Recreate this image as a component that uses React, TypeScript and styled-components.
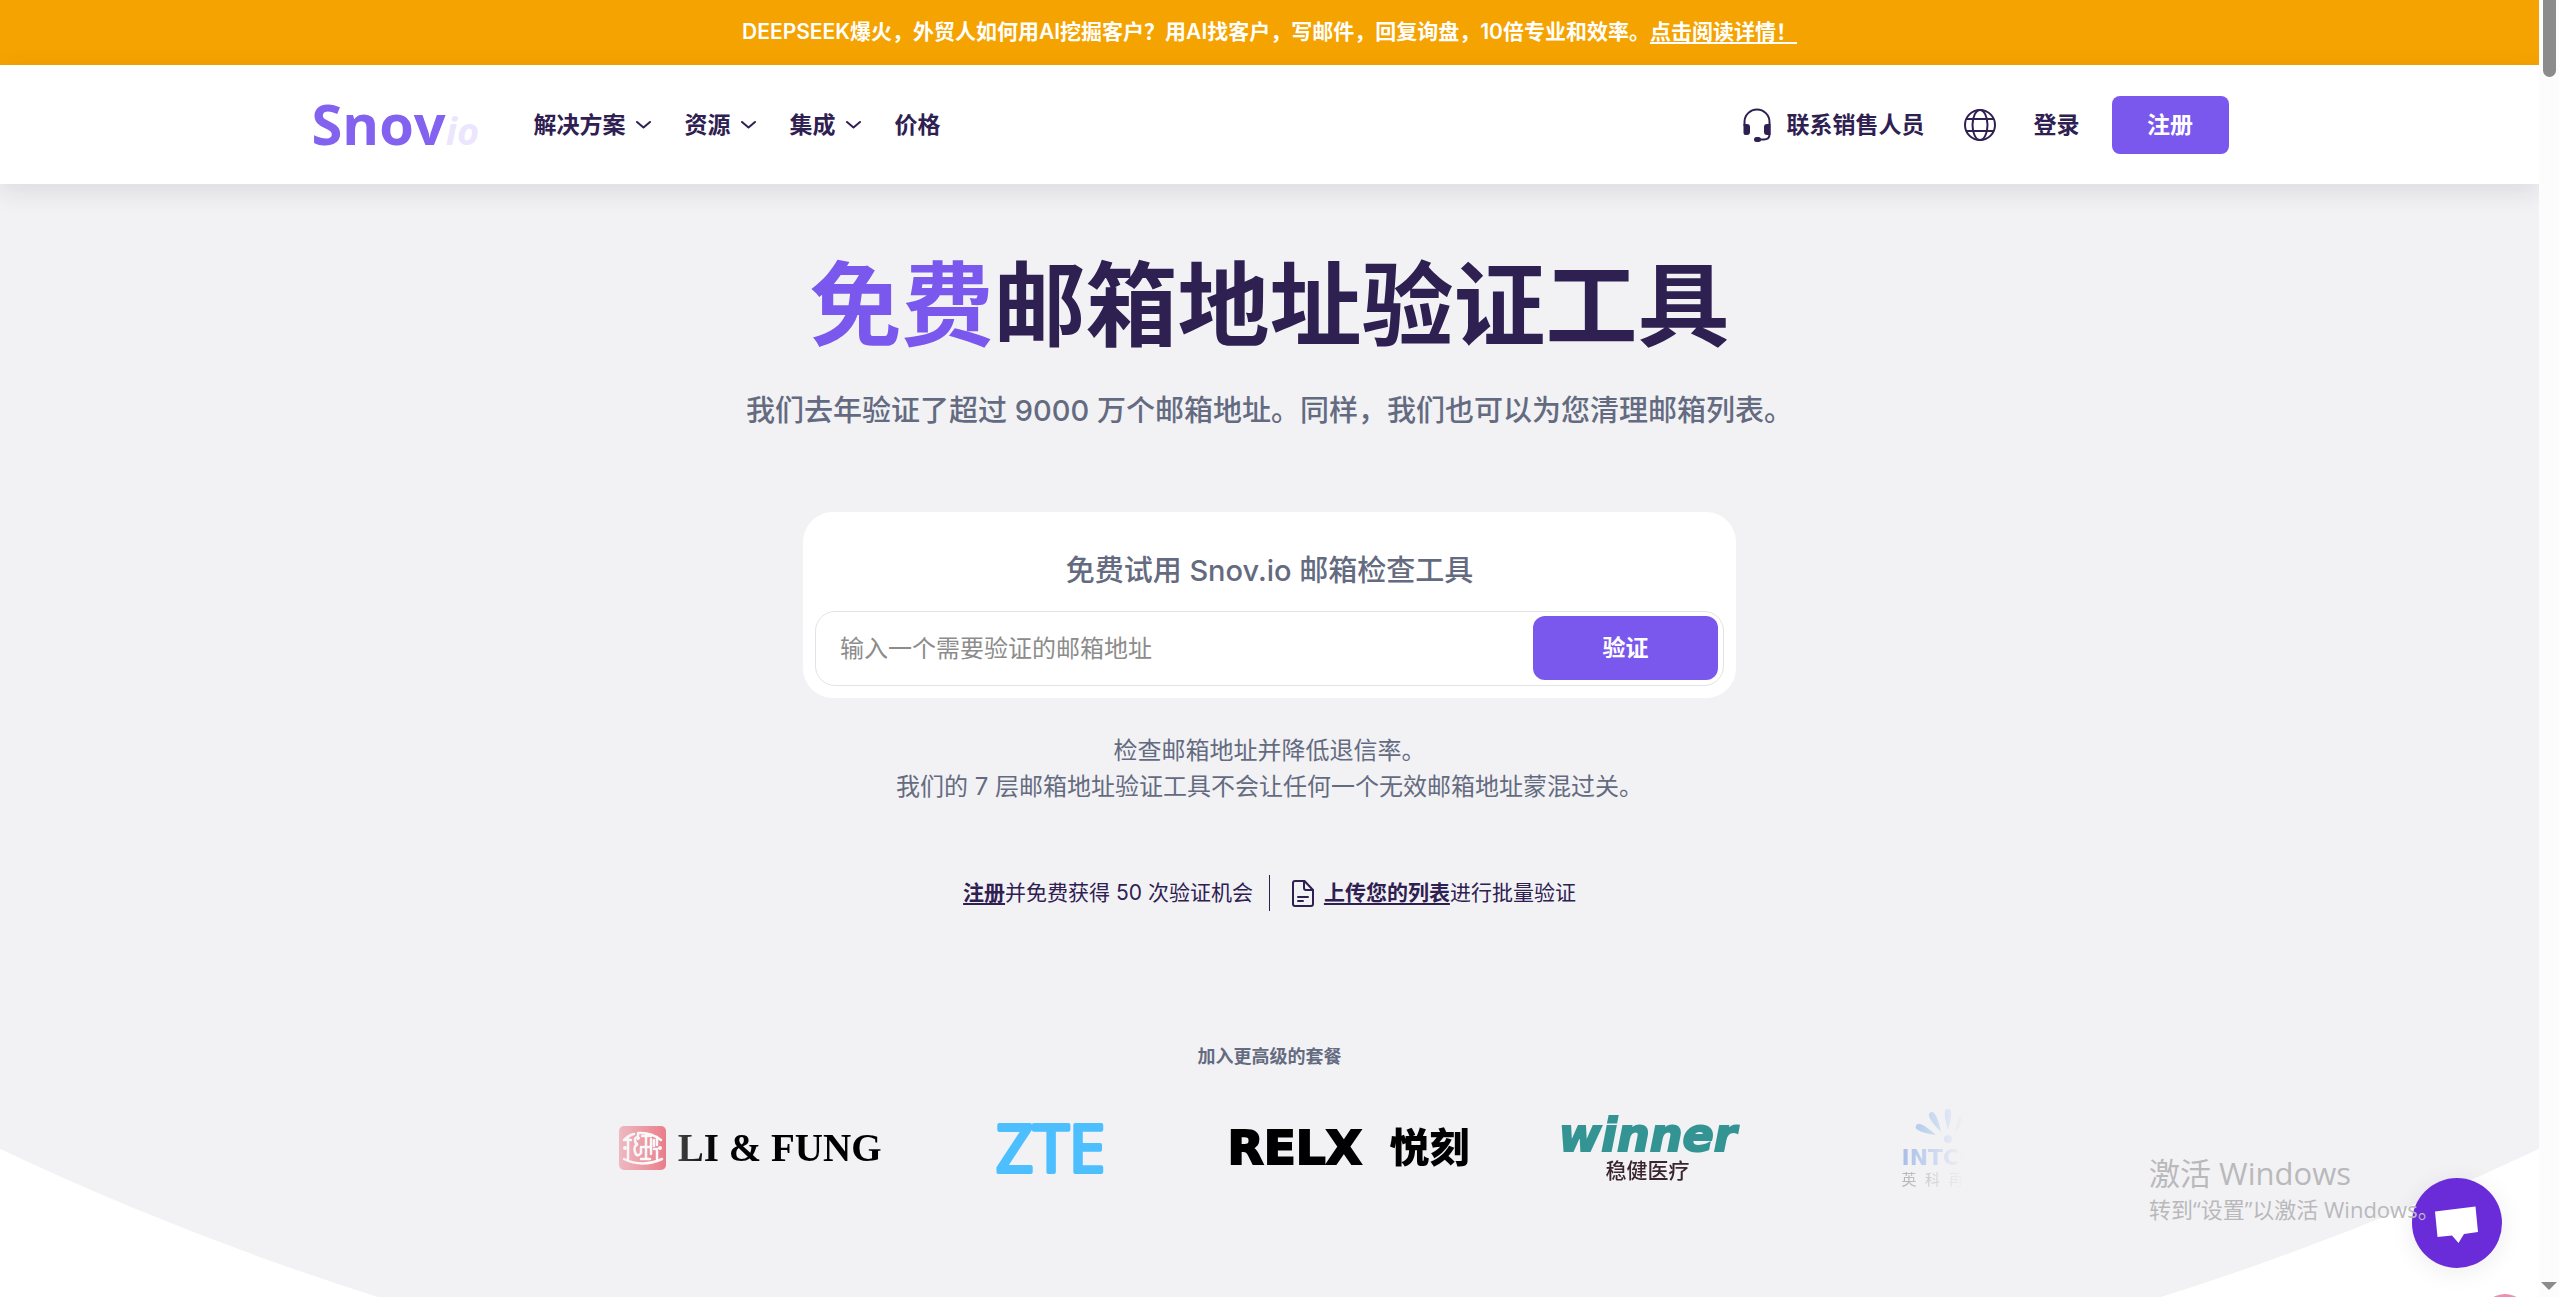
import React from "react";
import styled, { createGlobalStyle } from "styled-components";

const sans = `Inter, "Noto Sans CJK SC", sans-serif`;
const ink = "#2f2052";
const grey = "#646b80";
const purple = "#7a58ee";

const GlobalStyle = createGlobalStyle`
  * { box-sizing: border-box; }
  body { margin: 0; background: #fff; font-family: ${sans}; color: ${ink}; }
  a { color: inherit; }
  p, h1, h2 { margin: 0; }
  button, input { font-family: inherit; }
`;

const Shell = styled.div`
  position: relative;
  display: flex;
  height: 100vh;
  overflow: hidden;
`;

const Page = styled.div`
  flex: 1;
  min-width: 0;
  overflow: hidden;
`;

const Banner = styled.div`
  display: flex;
  justify-content: center;
  align-items: center;
  height: 65px;
  padding-bottom: 2px;
  background: #f5a300;
  color: #fff;
  font-size: 21px;
  font-weight: 600;
  line-height: 30px;
  white-space: pre;
`;

const BannerLink = styled.a`
  text-decoration: underline;
  text-decoration-thickness: 2px;
  text-underline-offset: 3px;
`;

const Header = styled.header`
  position: relative;
  z-index: 1;
  height: 119px;
  background: #fff;
  box-shadow: 0 8px 24px rgba(30, 28, 50, 0.1);
`;

const HeaderInner = styled.div`
  display: flex;
  align-items: center;
  width: 100%;
  max-width: 1918px;
  height: 100%;
  margin: 0 auto;
`;

const Logo = styled.a`
  width: 223px;
  padding: 4px 0 0 1px;
  color: #8262ee;
  font-family: "Open Sans", sans-serif;
  font-size: 56px;
  font-weight: 700;
  line-height: 72px;
  text-decoration: none;
`;

const LogoSuffix = styled.span`
  color: #ece5fe;
  font-size: 38px;
  font-style: italic;
`;

const Nav = styled.nav`
  display: flex;
  gap: 34px;
`;

const NavButton = styled.button`
  display: flex;
  align-items: center;
  gap: 10px;
  padding: 0;
  border: 0;
  background: none;
  color: ${ink};
  font-size: 23px;
  font-weight: 700;
  line-height: 32px;
  cursor: pointer;
`;

const Actions = styled.div`
  display: flex;
  align-items: center;
  margin-left: auto;
`;

const ActionLink = styled.a<{ $after: number }>`
  display: flex;
  align-items: center;
  gap: 16px;
  margin-right: ${(p) => p.$after}px;
  font-size: 23px;
  font-weight: 700;
  line-height: 32px;
  text-decoration: none;
`;

const LanguageButton = styled.button`
  display: flex;
  margin: 0 37px 0 0;
  padding: 0;
  border: 0;
  background: none;
  color: ${ink};
  cursor: pointer;
`;

const PrimaryButton = styled.button<{ $width: number; $height: number; $radius: number }>`
  flex: none;
  width: ${(p) => p.$width}px;
  height: ${(p) => p.$height}px;
  border: 0;
  border-radius: ${(p) => p.$radius}px;
  background: ${purple};
  color: #fff;
  font-size: 23px;
  font-weight: 700;
  line-height: 32px;
  cursor: pointer;
`;

const Hero = styled.main`
  display: flex;
  flex-direction: column;
  align-items: center;
  padding: 62px 0 236px;
  background: #f2f2f5;
  clip-path: circle(116vw at 50% calc(100% - 116vw));
`;

const Title = styled.h1`
  font-size: 92px;
  font-weight: 700;
  line-height: 120px;
`;

const Accent = styled.span`
  color: ${purple};
`;

const Lead = styled.p`
  margin-top: 23px;
  color: ${grey};
  font-size: 29px;
  font-weight: 500;
  line-height: 44px;
`;

const Card = styled.form`
  width: 933px;
  max-width: 100%;
  margin-top: 79px;
  padding: 37px 12px 12px;
  border-radius: 30px;
  background: #fff;
  text-align: center;
`;

const CardLabel = styled.label`
  display: block;
  color: ${grey};
  font-size: 29px;
  font-weight: 500;
  line-height: 44px;
`;

const Field = styled.div`
  display: flex;
  align-items: flex-start;
  height: 75px;
  margin-top: 18px;
  padding: 4px 5px 0 24px;
  border: 1px solid #e3e3e5;
  border-radius: 20px;
`;

const EmailInput = styled.input`
  flex: 1;
  min-width: 0;
  height: 64px;
  padding: 0;
  border: 0;
  outline: 0;
  background: none;
  color: ${ink};
  font-size: 24px;
  &::placeholder {
    color: #8c8c8c;
    opacity: 1;
  }
`;

const Note = styled.p`
  margin-top: 35px;
  color: ${grey};
  font-size: 24px;
  line-height: 36px;
  text-align: center;
`;

const Offers = styled.div`
  display: flex;
  align-items: center;
  margin-top: 70px;
  font-size: 21px;
  line-height: 36px;
`;

const Offer = styled.p`
  display: flex;
  align-items: center;
  padding-right: 16px;
  & + & {
    padding: 0 0 0 22px;
    border-left: 1px solid ${ink};
  }
  svg {
    margin-right: 10px;
  }
`;

const OfferLink = styled.a`
  font-weight: 700;
  text-decoration: underline;
  text-decoration-thickness: 2px;
  text-underline-offset: 3px;
`;

const Caption = styled.h2`
  margin-top: 132px;
  color: ${grey};
  font-size: 18px;
  font-weight: 700;
  line-height: 28px;
`;

const Clients = styled.div`
  display: flex;
  align-items: center;
  width: 1388px;
  max-width: 100%;
  height: 100px;
  margin-top: 27px;
  padding-left: 43px;
  overflow: hidden;
  mask-image: linear-gradient(90deg, transparent, #000 140px, #000 calc(100% - 140px), transparent);
`;

const Client = styled.div<{ $width: number; $after?: number }>`
  flex: none;
  display: flex;
  align-items: center;
  justify-content: space-between;
  width: ${(p) => p.$width}px;
  margin-right: ${(p) => p.$after ?? 0}px;
  white-space: nowrap;
`;

const StackedClient = styled(Client)`
  flex-direction: column;
  justify-content: center;
`;

const LiFung = styled.span`
  color: #000;
  font-family: "Liberation Serif", serif;
  font-size: 39px;
  font-weight: 700;
  line-height: 48px;
`;

const Relx = styled.span`
  color: #000;
  font-family: "DejaVu Sans", sans-serif;
  font-size: 47px;
  font-weight: 700;
  line-height: 56px;
  -webkit-text-stroke: 2px #000;
`;

const RelxChinese = styled.span`
  color: #000;
  font-size: 40px;
  font-weight: 900;
  line-height: 56px;
`;

const Winner = styled.span`
  color: #339493;
  font-family: "DejaVu Sans", sans-serif;
  font-size: 46px;
  font-style: italic;
  font-weight: 700;
  line-height: 44px;
  -webkit-text-stroke: 2px #339493;
`;

const WinnerChinese = styled.span`
  margin-top: 2px;
  color: #3a2530;
  font-size: 21px;
  font-weight: 500;
  line-height: 24px;
`;

const Intco = styled.span`
  align-self: flex-start;
  color: #4a7fd8;
  font-family: "DejaVu Sans", sans-serif;
  font-size: 22px;
  font-weight: 700;
  line-height: 26px;
`;

const IntcoChinese = styled.span`
  align-self: flex-start;
  color: #666;
  font-size: 15px;
  line-height: 18px;
  white-space: pre;
`;

const Scrollbar = styled.div`
  display: flex;
  flex: none;
  flex-direction: column;
  align-items: center;
  justify-content: space-between;
  width: 20px;
  padding-bottom: 7px;
  background: #fcfcfc;
`;

const Thumb = styled.div`
  width: 13px;
  height: 77px;
  border-radius: 0 0 7px 7px;
  background: #8b8b8b;
`;

const ArrowDown = styled.div`
  border: 8px solid transparent;
  border-top-color: #8b8b8b;
  border-bottom: 0;
`;

const ChatButton = styled.button`
  position: absolute;
  right: 57px;
  bottom: 29px;
  width: 90px;
  height: 90px;
  padding: 0;
  border: 0;
  border-radius: 50%;
  background: #6a2bd9;
  box-shadow: 0 4px 24px rgba(0, 0, 0, 0.08);
  cursor: pointer;
`;

const PinkBubble = styled.div`
  position: absolute;
  right: 31px;
  bottom: -43px;
  width: 46px;
  height: 46px;
  border-radius: 50%;
  background: #ee8fae;
`;

const Watermark = styled.div`
  position: absolute;
  right: 124px;
  bottom: 72px;
  width: 286px;
  color: #b9b9bb;
  font-family: "Open Sans", "Noto Sans CJK SC", sans-serif;
  font-size: 22px;
  font-weight: 400;
  line-height: 32px;
  white-space: nowrap;
  pointer-events: none;
`;

const WatermarkTitle = styled.p`
  font-size: 31px;
  line-height: 40px;
`;

const Chevron = () => (
  <svg width="15" height="8" viewBox="0 0 15 8" fill="none" stroke={ink} strokeWidth="2" strokeLinecap="round" strokeLinejoin="round">
    <path d="M1 1l6.500 5.500L14 1" />
  </svg>
);

const Headset = () => (
  <svg width="28" height="34" viewBox="0 0 28 34" fill="none" stroke={ink} strokeWidth="2">
    <path d="M1.500 18V14a12.500 12.500 0 0 1 25 0V26q0 5.500-5.500 5.500H15" />
    <path d="M0.500 16h3.500a3 3 0 0 1 3 3v5a3 3 0 0 1-3 3h-1.500a2 2 0 0 1-2-2zM27.500 16h-3.500a3 3 0 0 0-3 3v5a3 3 0 0 0 3 3h3.500z" fill={ink} stroke="none" />
    <rect x="11" y="29" width="7" height="5" rx="2.500" fill={ink} stroke="none" />
  </svg>
);

const Globe = () => (
  <svg width="34" height="34" viewBox="0 0 34 34" fill="none" stroke={ink} strokeWidth="2">
    <circle cx="17" cy="17" r="15" />
    <ellipse cx="17" cy="17" rx="7.500" ry="15" />
    <path d="M3 11h28M3 23h28" />
  </svg>
);

const FileIcon = () => (
  <svg width="22" height="27" viewBox="0 0 22 27" fill="none" stroke={ink} strokeWidth="2" strokeLinecap="round" strokeLinejoin="round">
    <path d="M3 1h9.500L21 10v14a2 2 0 0 1-2 2H3a2 2 0 0 1-2-2V3a2 2 0 0 1 2-2z" />
    <path d="M12 1.500v6.500a2 2 0 0 0 2 2h6.500M6 17h10M6 21h5" />
  </svg>
);

const LiFungSeal = () => (
  <svg width="47" height="44" viewBox="0 0 47 44">
    <rect width="47" height="44" rx="5" fill="#e63c4f" />
    <g fill="none" stroke="#fff" strokeWidth="2.500" strokeLinecap="round">
      <path d="M5 14q5-5 10-6M19 7q13-1 23 7M5 33q18 9 38 0" />
      <path d="M9 11v22M6 14h6M38 11v8M38 25v8M35 23h3" />
      <path d="M20 12q-4-2-4 2t3 4q-5 2-3 8t6 1v-6M19 8v5" />
      <path d="M27 8v25M22 33h9M23 10h9M24 21h6M32 13v15M35 14v6" />
    </g>
    <circle cx="6" cy="22" r="2" fill="#fff" />
    <circle cx="41" cy="22" r="2" fill="#fff" />
  </svg>
);

const ZteLogo = () => (
  <svg width="112" height="92" viewBox="0 0 112 92">
    <text
      x="1"
      y="70"
      fill="#4dbfff"
      stroke="#4dbfff"
      strokeWidth="4"
      strokeLinejoin="round"
      fontFamily="'Open Sans', sans-serif"
      fontSize="65"
      fontWeight="400"
    >
      ZTE
    </text>
  </svg>
);

const IntcoBurst = () => (
  <svg width="92" height="38" viewBox="0 0 92 38">
    <circle cx="46" cy="32" r="4" fill="#5b9be0" />
    <g fill="#3f86dc">
      <path id="petal" d="M46 23Q42 9 43 5a3 3 0 0 1 6 0Q50 9 46 23z" />
      <path d="M39 25Q28 14 27 9a3 3 0 0 1 5-3Q36 10 39 25z" />
      <path d="M34 28Q20 26 16 23a3 3 0 0 1 2-6Q23 18 34 28z" />
      <path d="M53 25Q64 14 65 9a3 3 0 0 0-5-3Q56 10 53 25z" />
      <path d="M58 28Q72 26 76 23a3 3 0 0 0-2-6Q69 18 58 28z" />
    </g>
  </svg>
);

const ChatGlyph = () => (
  <svg width="90" height="90" viewBox="0 0 90 90" fill="#fff">
    <path d="M23 33.500L63.500 28.500L66 54L52 56L46.500 65L40 57.500L25.500 59z" />
  </svg>
);

const menu = [
  { label: "解决方案", open: true },
  { label: "资源", open: true },
  { label: "集成", open: true },
  { label: "价格", open: false },
];

export default function App() {
  return (
    <Shell>
      <GlobalStyle />
      <Page>
        <Banner>
          <span>DEEPSEEK爆火，外贸人如何用AI挖掘客户？用AI找客户，写邮件，回复询盘，10倍专业和效率。</span>
          <BannerLink href="#news">点击阅读详情！</BannerLink>
        </Banner>
        <Header>
          <HeaderInner>
            <Logo href="#home">
              Snov<LogoSuffix>io</LogoSuffix>
            </Logo>
            <Nav>
              {menu.map((item) => (
                <NavButton key={item.label} type="button">
                  {item.label}
                  {item.open && <Chevron />}
                </NavButton>
              ))}
            </Nav>
            <Actions>
              <ActionLink href="#sales" $after={38}>
                <Headset />
                联系销售人员
              </ActionLink>
              <LanguageButton type="button" aria-label="语言">
                <Globe />
              </LanguageButton>
              <ActionLink href="#login" $after={32}>
                登录
              </ActionLink>
              <PrimaryButton type="button" $width={117} $height={58} $radius={8}>
                注册
              </PrimaryButton>
            </Actions>
          </HeaderInner>
        </Header>
        <Hero>
          <Title>
            <Accent>免费</Accent>邮箱地址验证工具
          </Title>
          <Lead>我们去年验证了超过 9000 万个邮箱地址。同样，我们也可以为您清理邮箱列表。</Lead>
          <Card onSubmit={(e) => e.preventDefault()}>
            <CardLabel htmlFor="email">免费试用 Snov.io 邮箱检查工具</CardLabel>
            <Field>
              <EmailInput id="email" type="text" placeholder="输入一个需要验证的邮箱地址" />
              <PrimaryButton type="submit" $width={185} $height={64} $radius={12}>
                验证
              </PrimaryButton>
            </Field>
          </Card>
          <Note>
            检查邮箱地址并降低退信率。
            <br />
            我们的 7 层邮箱地址验证工具不会让任何一个无效邮箱地址蒙混过关。
          </Note>
          <Offers>
            <Offer>
              <OfferLink href="#register">注册</OfferLink>并免费获得 50 次验证机会
            </Offer>
            <Offer>
              <FileIcon />
              <OfferLink href="#upload">上传您的列表</OfferLink>进行批量验证
            </Offer>
          </Offers>
          <Caption>加入更高级的套餐</Caption>
          <Clients>
            <Client $width={263} $after={113}>
              <LiFungSeal />
              <LiFung>LI &amp; FUNG</LiFung>
            </Client>
            <Client $width={112} $after={121}>
              <ZteLogo />
            </Client>
            <Client $width={242} $after={87}>
              <Relx>RELX</Relx>
              <RelxChinese>悦刻</RelxChinese>
            </Client>
            <StackedClient $width={182} $after={163}>
              <Winner>winner</Winner>
              <WinnerChinese>稳健医疗</WinnerChinese>
            </StackedClient>
            <StackedClient $width={92}>
              <IntcoBurst />
              <Intco>INTCO</Intco>
              <IntcoChinese>英  科  再  生</IntcoChinese>
            </StackedClient>
          </Clients>
        </Hero>
      </Page>
      <Scrollbar>
        <Thumb />
        <ArrowDown />
      </Scrollbar>
      <PinkBubble />
      <ChatButton type="button" aria-label="聊天">
        <ChatGlyph />
      </ChatButton>
      <Watermark>
        <WatermarkTitle>激活 Windows</WatermarkTitle>
        <p>转到“设置”以激活 Windows。</p>
      </Watermark>
    </Shell>
  );
}
